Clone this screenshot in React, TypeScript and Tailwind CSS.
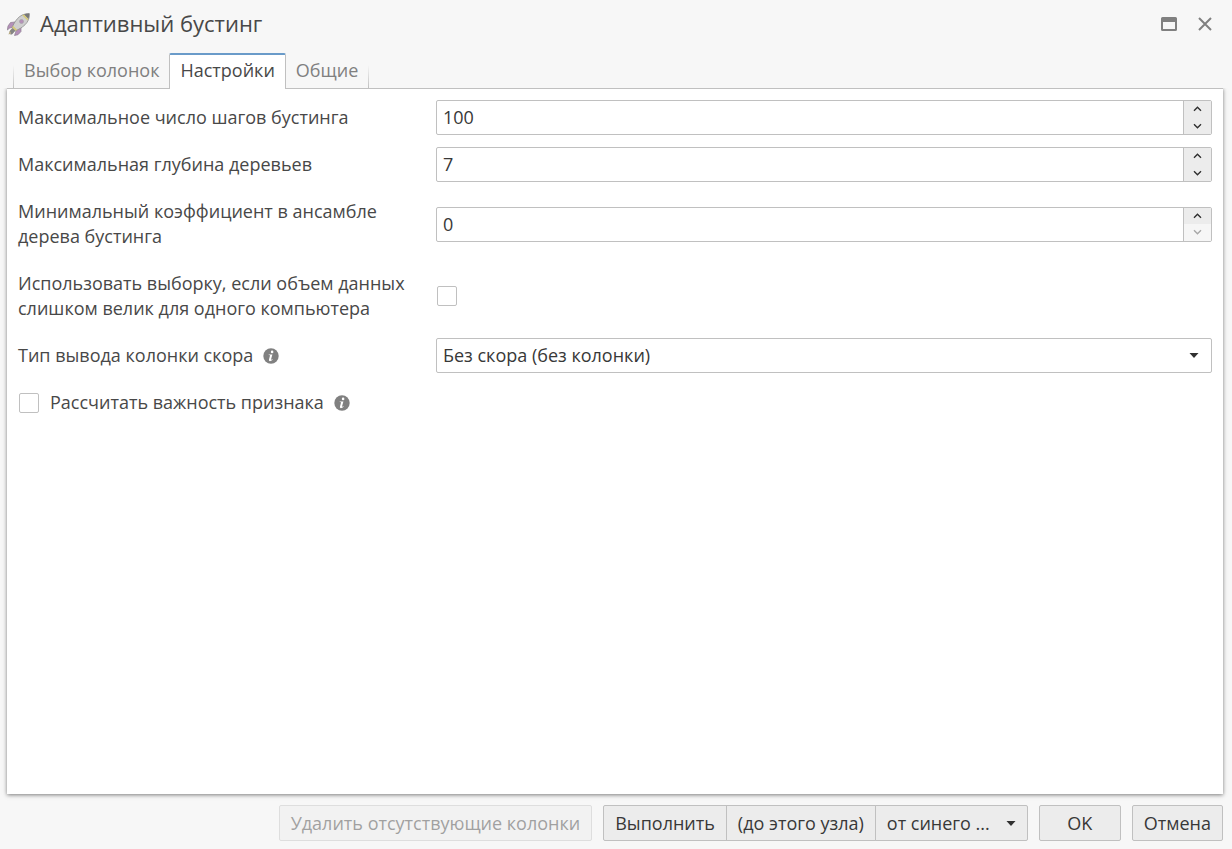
import React, { useState } from 'react';

const tabs = [
  { id: 'columns', label: 'Выбор колонок' },
  { id: 'settings', label: 'Настройки' },
  { id: 'common', label: 'Общие' },
];

const RocketIcon = () => (
  <svg width="23" height="23" viewBox="0 0 23 23" aria-hidden="true">
    <path d="M8 9 3.5 9.5 1 13 0.3 17l2.5-2 4-1z" fill="#b48fb8" stroke="#8d7f90" strokeWidth="0.7" />
    <path d="M14 14.5 14 18.5 11 21.7 7.5 22.5 8.5 19.5 9.5 16z" fill="#b48fb8" stroke="#8d7f90" strokeWidth="0.7" />
    <path d="M4.5 15.5 2.5 18.5 1.5 21.5 4.5 20.5 7.5 18.5z" fill="#b5a982" />
    <path d="M6 14.5 8.5 17.5 5.5 21 3.5 22 4 19 2.5 18.5z" fill="#858585" />
    <path d="M22.3 0.6C17 0.6 13.2 2.4 10.3 5.8 8 8.5 6.3 11.5 5.2 14.4L8.6 17.8C12 16.3 15.3 14.4 18 11.8 21.2 8.6 22.6 5.5 22.3 0.6z" fill="#cfcfcf" stroke="#8d8d8d" strokeWidth="0.8" />
    <path d="M22.3 0.6C20.5 0.5 18.6 0.8 17 1.5L21.4 6C22.1 4.4 22.4 2.6 22.3 0.6z" fill="#777777" />
    <path d="M16.8 1.6 21.3 6.1 20.6 7.6 15.2 2.3z" fill="#d6ca77" />
    <circle cx="14.5" cy="8.5" r="2" fill="#b58fb9" stroke="#a5a0a6" strokeWidth="0.7" />
    <path d="M6 12.8 10.3 17 8.6 17.8 5.2 14.4z" fill="#d6ca77" />
  </svg>
);

const InfoIcon = () => (
  <svg width="16" height="16" viewBox="0 0 16 16" className="shrink-0" aria-hidden="true">
    <circle cx="8" cy="8" r="7.7" fill="#808080" />
    <circle cx="9.1" cy="3.9" r="1.3" fill="#ffffff" />
    <path d="M5.8 6.5H9.4L8 11.6Q8 12.1 9.4 11.3L9.7 11.8Q7.8 13.4 6.5 13.1Q5.6 12.8 6 11.4L7.1 7.3L5.6 7.1z" fill="#ffffff" />
  </svg>
);

const Chevron = ({ up }: { up?: boolean }) => (
  <svg width="9" height="6" viewBox="0 0 9 6" aria-hidden="true">
    <path d={up ? 'M1 4.8 4.5 1.3 8 4.8' : 'M1 1.2 4.5 4.7 8 1.2'} fill="none" stroke="currentColor" strokeWidth="1.4" />
  </svg>
);

const Caret = () => (
  <svg width="10" height="5" viewBox="0 0 10 5" aria-hidden="true">
    <path d="M0.5 0h9L5 5z" fill="#303030" />
  </svg>
);

interface NumberFieldProps {
  id: string;
  label: string;
  value: number;
  onChange: (value: number) => void;
}

const NumberField: React.FC<NumberFieldProps> = ({ id, label, value, onChange }) => (
  <div className="flex items-center">
    <label htmlFor={id} className="w-[418px] shrink-0 py-[5px] pr-3">
      {label}
    </label>
    <div className="flex h-[35px] min-w-0 flex-1 overflow-hidden rounded-xs border border-[#c0c0c0] bg-white">
      <input
        id={id}
        type="number"
        min={0}
        value={value}
        onChange={(e) => onChange(Number(e.target.value))}
        className="min-w-0 flex-1 px-1.5 text-[#383838] outline-none [appearance:textfield] [&::-webkit-inner-spin-button]:appearance-none"
      />
      <div className="flex w-7 flex-col border-l border-[#c0c0c0] text-[#303030]">
        <button
          type="button"
          aria-label="Увеличить"
          onClick={() => onChange(value + 1)}
          className="flex flex-1 items-center justify-center bg-[#ececec]"
        >
          <Chevron up />
        </button>
        <button
          type="button"
          aria-label="Уменьшить"
          disabled={value <= 0}
          onClick={() => onChange(value - 1)}
          className="flex flex-1 items-center justify-center bg-[#ececec] disabled:bg-[#f6f6f6] disabled:text-[#a8a8a8]"
        >
          <Chevron />
        </button>
      </div>
    </div>
  </div>
);

const checkboxClass =
  'ml-px size-5 shrink-0 appearance-none rounded-xs border border-[#c0c0c0] bg-white checked:bg-[#6a9bc9]';

const buttonClass =
  'flex h-9 items-center justify-center border border-[#c0c0c0] bg-[#ececec] px-[11px] whitespace-nowrap text-[#383838]';

export default function App() {
  const [activeTab, setActiveTab] = useState('settings');
  const [steps, setSteps] = useState(100);
  const [depth, setDepth] = useState(7);
  const [minCoef, setMinCoef] = useState(0);
  const [useSample, setUseSample] = useState(false);
  const [importance, setImportance] = useState(false);
  const [score, setScore] = useState('none');

  return (
    <div className="flex min-h-screen flex-col bg-[#f7f7f7] px-[7px] font-['Open_Sans',sans-serif] text-[18px] leading-[25px] text-[#484848]">
      {/* Header */}
      <header className="flex h-[53px] items-center gap-[10px] pr-[9px] pb-[5px]">
        <RocketIcon />
        <h1 className="flex-1 pb-0.5 text-[22px] leading-[30px]">Адаптивный бустинг</h1>
        <div className="flex items-center gap-[21px] pr-1">
          <button type="button" aria-label="Развернуть">
            <svg width="16" height="14" viewBox="0 0 16 14">
              <rect x="1" y="1" width="14" height="12" rx="0.5" fill="none" stroke="#808080" strokeWidth="2" />
              <rect x="1" y="1" width="14" height="4" fill="#808080" />
            </svg>
          </button>
          <button type="button" aria-label="Закрыть">
            <svg width="14" height="14" viewBox="0 0 14 14">
              <path d="M1 1 13 13M13 1 1 13" stroke="#808080" strokeWidth="2" />
            </svg>
          </button>
        </div>
      </header>

      {/* Tabs */}
      <div role="tablist" className="z-10 -mb-px flex h-9 items-stretch pl-[6px]">
        <span className="mt-3 mb-px w-px bg-linear-to-b from-transparent to-[#c0c0c0]" />
        {tabs.map((tab) => (
          <button
            key={tab.id}
            type="button"
            role="tab"
            aria-selected={activeTab === tab.id}
            onClick={() => setActiveTab(tab.id)}
            className={
              activeTab === tab.id
                ? 'rounded-t-xs border-x border-t-2 border-x-[#c0c0c0] border-t-[#6a9bc9] bg-white px-[10px] pb-1'
                : 'px-[10px] pb-0.5 text-[#808080]'
            }
          >
            {tab.label}
          </button>
        ))}
        <span className="mt-3 mb-px w-px bg-linear-to-b from-transparent to-[#c0c0c0]" />
      </div>

      {/* Settings form */}
      <main className="mr-0.5 flex flex-1 flex-col gap-3 border-t border-[#c0c0c0] bg-white px-[11px] py-[11px] shadow-[0_1px_4px_rgba(0,0,0,0.5)] [clip-path:inset(0_-8px_-8px_-8px)]">
        <NumberField id="steps" label="Максимальное число шагов бустинга" value={steps} onChange={setSteps} />
        <NumberField id="depth" label="Максимальная глубина деревьев" value={depth} onChange={setDepth} />
        <NumberField
          id="min-coef"
          label="Минимальный коэффициент в ансамбле дерева бустинга"
          value={minCoef}
          onChange={setMinCoef}
        />
        <div className="flex items-center">
          <label htmlFor="use-sample" className="w-[418px] shrink-0 py-[5px] pr-3">
            Использовать выборку, если объем данных слишком велик для одного компьютера
          </label>
          <input
            id="use-sample"
            type="checkbox"
            checked={useSample}
            onChange={(e) => setUseSample(e.target.checked)}
            className={checkboxClass}
          />
        </div>
        <div className="flex items-center">
          <label htmlFor="score" className="flex w-[418px] shrink-0 items-center gap-[10px] py-[5px]">
            Тип вывода колонки скора
            <InfoIcon />
          </label>
          <div className="relative min-w-0 flex-1">
            <select
              id="score"
              value={score}
              onChange={(e) => setScore(e.target.value)}
              className="block h-[35px] w-full appearance-none rounded-xs border border-[#c0c0c0] bg-white px-1.5 text-[#383838]"
            >
              <option value="none">Без скора (без колонки)</option>
            </select>
            <span className="pointer-events-none absolute inset-y-0 right-[13px] flex items-center">
              <Caret />
            </span>
          </div>
        </div>
        <div className="flex h-[35px] items-center gap-[10px]">
          <label className="flex items-center gap-[11px]">
            <input
              type="checkbox"
              checked={importance}
              onChange={(e) => setImportance(e.target.checked)}
              className={checkboxClass}
            />
            Рассчитать важность признака
          </label>
          <InfoIcon />
        </div>
      </main>

      {/* Footer */}
      <footer className="mr-0.5 flex justify-end gap-[11px] pt-[11px] pb-2">
        <button type="button" disabled className={`${buttonClass} rounded-xs opacity-45`}>
          Удалить отсутствующие колонки
        </button>
        <div className="flex">
          <button type="button" className={`${buttonClass} rounded-l-xs`}>
            Выполнить
          </button>
          <button type="button" className={`${buttonClass} -ml-px`}>
            (до этого узла)
          </button>
          <button type="button" aria-haspopup="menu" className={`${buttonClass} -ml-px gap-4 rounded-r-xs`}>
            от синего ...
            <Caret />
          </button>
        </div>
        <button type="button" className={`${buttonClass} w-[82px] rounded-xs`}>
          OK
        </button>
        <button type="button" className={`${buttonClass} rounded-xs`}>
          Отмена
        </button>
      </footer>
    </div>
  );
}
